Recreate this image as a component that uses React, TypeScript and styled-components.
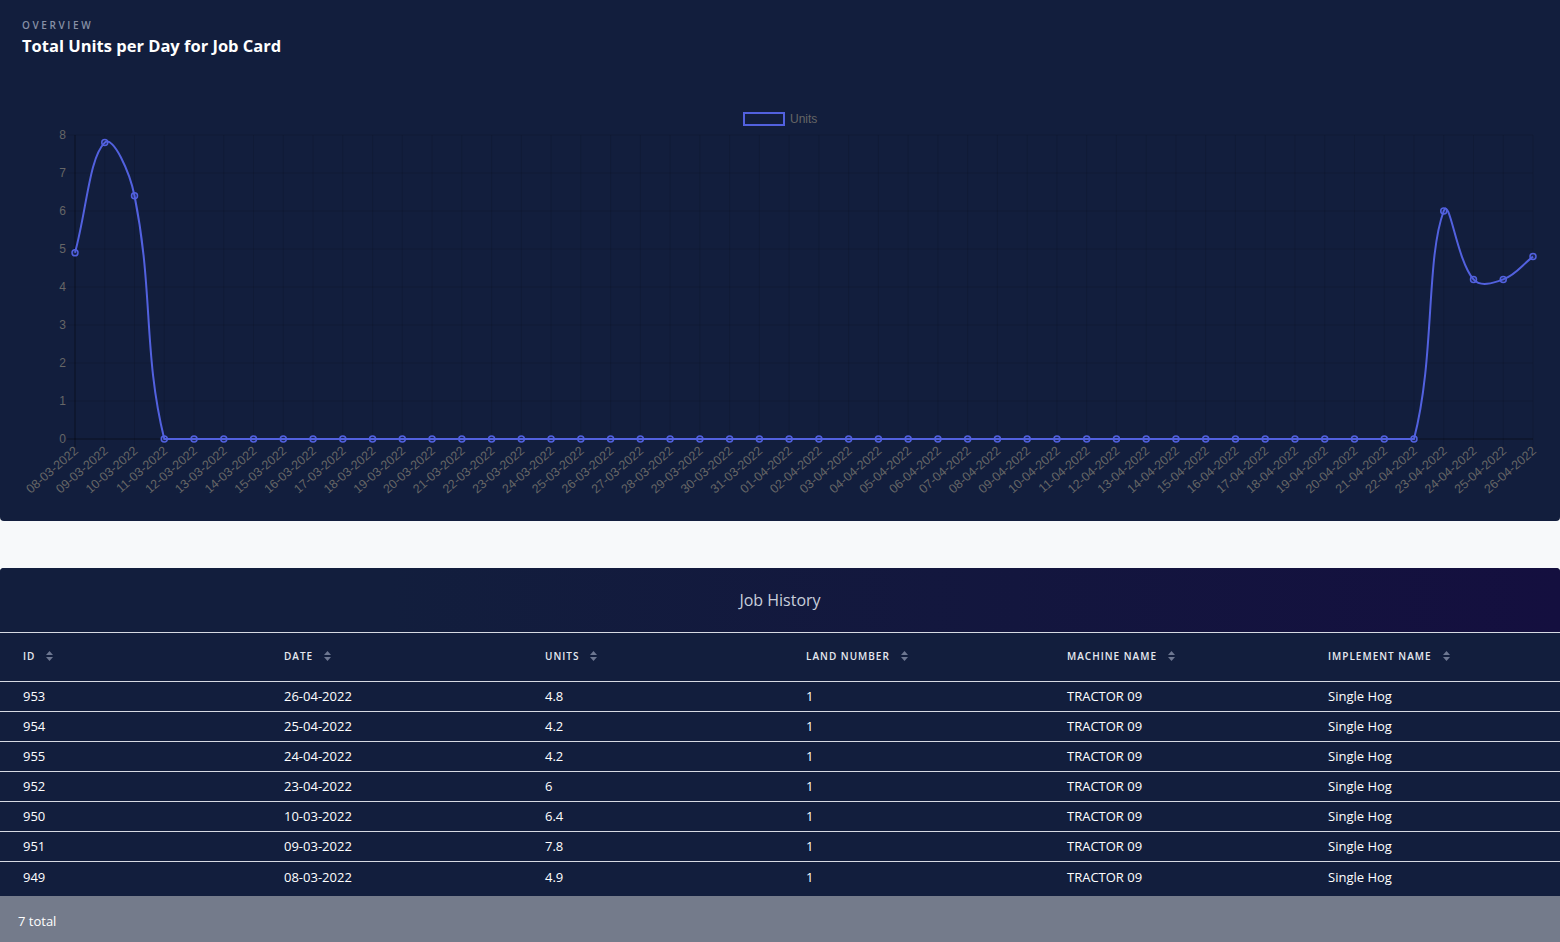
import styled, { createGlobalStyle } from "styled-components";

const GlobalStyle = createGlobalStyle`
  html, body {
    margin: 0;
    padding: 0;
    background: #f7f9fa;
    font-family: "Open Sans", "Noto Sans", sans-serif;
  }
`;

const Page = styled.div`
  width: 1560px;
  display: flex;
  flex-direction: column;
  gap: 47px;
`;

const Panel = styled.section`
  background: #121e3d;
  border-radius: 0 0 4px 4px;
  height: 521px;
  display: flex;
  flex-direction: column;
`;

const PanelHeader = styled.header`
  height: 70px;
  box-sizing: border-box;
  padding: 18px 22px 0;
`;

const Eyebrow = styled.div`
  font-size: 10px;
  line-height: 14px;
  letter-spacing: 2.6px;
  font-weight: 600;
  color: #8790a5;
  text-transform: uppercase;
`;

const Title = styled.h1`
  margin: 2px 0 0;
  font-size: 16.5px;
  line-height: 24px;
  font-weight: 700;
  color: #ffffff;
`;

const ChartSvg = styled.svg`
  display: block;
  width: 1560px;
  height: 451px;
`;

const TableCard = styled.section`
  background: #121e3d;
  border-radius: 4px 4px 0 0;
  overflow: hidden;
`;

const TableTitle = styled.div`
  height: 64px;
  display: flex;
  align-items: center;
  justify-content: center;
  background: linear-gradient(90deg, #121e3d 0%, #121e3d 25%, #140f3f 100%);
  border-bottom: 1px solid #d6dae3;
  color: #c8cedb;
  font-size: 16px;
`;

const Row = styled.div<{ $head?: boolean; $last?: boolean }>`
  display: grid;
  grid-template-columns: repeat(5, 261px) 1fr;
  align-items: center;
  box-sizing: border-box;
  height: ${(p) => (p.$head ? "49px" : p.$last ? "34px" : "30px")};
  padding-bottom: ${(p) => (p.$last ? "4px" : "2px")};
  border-bottom: ${(p) => (p.$last ? "none" : "1px solid #d6dae3")};
`;

const HeadCell = styled.div`
  padding-left: 23px;
  display: flex;
  align-items: center;
  gap: 11px;
  font-size: 10px;
  font-weight: 600;
  letter-spacing: 1px;
  color: #e6e9f0;
  text-transform: uppercase;
`;

const Cell = styled.div`
  padding-left: 23px;
  font-size: 13px;
  color: #ffffff;
`;

const Footer = styled.footer`
  height: 46px;
  box-sizing: border-box;
  background: #747b8b;
  display: flex;
  align-items: center;
  padding: 4px 0 0 18px;
  font-size: 13px;
  color: #ffffff;
`;

function SortIcon() {
  return (
    <svg width="7" height="10" viewBox="0 0 7 10">
      <path d="M3.5 0 L7 4 L0 4 Z" fill="#6d7791" />
      <path d="M3.5 10 L7 6 L0 6 Z" fill="#6d7791" />
    </svg>
  );
}

// chart data
const days: string[] = [];
for (let d = 8; d <= 31; d++) days.push(`${String(d).padStart(2, "0")}-03-2022`);
for (let d = 1; d <= 26; d++) days.push(`${String(d).padStart(2, "0")}-04-2022`);

const values = days.map(() => 0);
values[0] = 4.9;
values[1] = 7.8;
values[2] = 6.4;
values[46] = 6;
values[47] = 4.2;
values[48] = 4.2;
values[49] = 4.8;

const LEFT = 75;
const RIGHT = 1533;
const TOP = 65;
const BOTTOM = 369;
const LINE = "#5261df";
const stepX = (RIGHT - LEFT) / (days.length - 1);
const pts = values.map((v, i) => ({ x: LEFT + i * stepX, y: BOTTOM - (v / 8) * (BOTTOM - TOP) }));

const clamp = (v: number, a: number, b: number) => Math.max(a, Math.min(b, v));

function buildPath() {
  const t = 0.4;
  const ctrl = pts.map((cur, i) => {
    const prev = pts[i - 1] ?? cur;
    const next = pts[i + 1] ?? cur;
    const d01 = Math.hypot(cur.x - prev.x, cur.y - prev.y);
    const d12 = Math.hypot(next.x - cur.x, next.y - cur.y);
    const s01 = d01 + d12 ? d01 / (d01 + d12) : 0;
    const s12 = d01 + d12 ? d12 / (d01 + d12) : 0;
    const fa = t * s01;
    const fb = t * s12;
    return {
      px: clamp(cur.x - fa * (next.x - prev.x), LEFT, RIGHT),
      py: clamp(cur.y - fa * (next.y - prev.y), TOP, BOTTOM),
      nx: clamp(cur.x + fb * (next.x - prev.x), LEFT, RIGHT),
      ny: clamp(cur.y + fb * (next.y - prev.y), TOP, BOTTOM),
    };
  });
  let d = `M${pts[0].x} ${pts[0].y}`;
  for (let i = 1; i < pts.length; i++) {
    d += ` C${ctrl[i - 1].nx} ${ctrl[i - 1].ny} ${ctrl[i].px} ${ctrl[i].py} ${pts[i].x} ${pts[i].y}`;
  }
  return d;
}

function Chart() {
  const ticks = [0, 1, 2, 3, 4, 5, 6, 7, 8];
  return (
    <ChartSvg viewBox="0 0 1560 451">
      <rect x="744" y="43" width="40" height="12" fill="none" stroke={LINE} strokeWidth="2" />
      <text x="790" y="53" fontSize="12" fill="#666" fontFamily="'Liberation Sans', Arial, sans-serif">
        Units
      </text>
      {ticks.map((v) => {
        const y = BOTTOM - (v / 8) * (BOTTOM - TOP);
        return (
          <g key={v}>
            <line x1={LEFT - 8} x2={RIGHT} y1={y} y2={y} stroke="rgba(0,0,0,0.1)" strokeWidth="1" />
            <text x={66} y={y + 4} textAnchor="end" fontSize="12" fill="#666" fontFamily="'Liberation Sans', Arial, sans-serif">
              {v}
            </text>
          </g>
        );
      })}
      {pts.map((p, i) => (
        <line key={i} x1={p.x} x2={p.x} y1={TOP} y2={BOTTOM + 8} stroke="rgba(0,0,0,0.1)" strokeWidth="1" />
      ))}
      <line x1={LEFT} x2={LEFT} y1={TOP} y2={BOTTOM + 8} stroke="rgba(0,0,0,0.35)" strokeWidth="1" />
      <line x1={LEFT - 8} x2={RIGHT} y1={BOTTOM} y2={BOTTOM} stroke="rgba(0,0,0,0.35)" strokeWidth="1" />
      {pts.map((p, i) => (
        <text
          key={i}
          transform={`translate(${p.x + 4} ${BOTTOM + 13}) rotate(-41)`}
          textAnchor="end"
          fontSize="12.5"
          fill="#666"
          fontFamily="'Liberation Sans', Arial, sans-serif"
        >
          {days[i]}
        </text>
      ))}
      <path d={buildPath()} fill="none" stroke={LINE} strokeWidth="2" />
      {pts.map((p, i) => (
        <circle key={i} cx={p.x} cy={p.y} r="3" fill="rgba(82,97,223,0.15)" stroke={LINE} strokeWidth="1.5" />
      ))}
    </ChartSvg>
  );
}

const columns = ["ID", "Date", "Units", "Land Number", "Machine Name", "Implement Name"];
const rows = [
  ["953", "26-04-2022", "4.8"],
  ["954", "25-04-2022", "4.2"],
  ["955", "24-04-2022", "4.2"],
  ["952", "23-04-2022", "6"],
  ["950", "10-03-2022", "6.4"],
  ["951", "09-03-2022", "7.8"],
  ["949", "08-03-2022", "4.9"],
];

export default function App() {
  return (
    <>
      <GlobalStyle />
      <Page>
        <Panel>
          <PanelHeader>
            <Eyebrow>Overview</Eyebrow>
            <Title>Total Units per Day for Job Card</Title>
          </PanelHeader>
          <Chart />
        </Panel>
        <TableCard>
          <TableTitle>Job History</TableTitle>
          <Row $head>
            {columns.map((c) => (
              <HeadCell key={c}>
                {c}
                <SortIcon />
              </HeadCell>
            ))}
          </Row>
          {rows.map((r, i) => (
            <Row key={r[0]} $last={i === rows.length - 1}>
              <Cell>{r[0]}</Cell>
              <Cell>{r[1]}</Cell>
              <Cell>{r[2]}</Cell>
              <Cell>1</Cell>
              <Cell>TRACTOR 09</Cell>
              <Cell>Single Hog</Cell>
            </Row>
          ))}
          <Footer>7 total</Footer>
        </TableCard>
      </Page>
    </>
  );
}
